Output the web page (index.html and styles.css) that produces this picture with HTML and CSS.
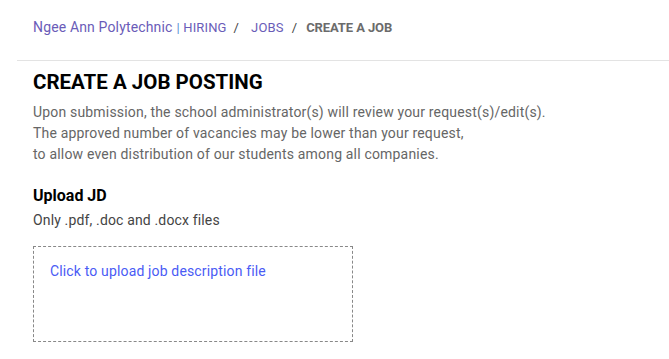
FILE: index.html
```html
<!DOCTYPE html>
<html>
<head>
<meta charset="utf-8">
<link rel="stylesheet" href="styles.css">
</head>
<body>
<nav class="crumbs">
  <span class="brand">Ngee Ann Polytechnic</span>
  <span class="org"><span class="pipe">|</span> HIRING</span>
  <span class="sep">/</span>
  <span class="link">JOBS</span>
  <span class="sep sep-2">/</span>
  <span class="current">CREATE A JOB</span>
</nav>
<main class="content">
  <h1 class="title">CREATE A JOB POSTING</h1>
  <p class="intro">Upon submission, the school administrator(s) will review your request(s)/edit(s).<br>The approved number of vacancies may be lower than your request,<br>to allow even distribution of our students among all companies.</p>
  <h2 class="subtitle">Upload JD</h2>
  <p class="hint">Only .pdf, .doc and .docx files</p>
  <div class="dropzone"><span class="drop-text">Click to upload job description file</span></div>
</main>
</body>
</html>
```
FILE: styles.css
```css
* { box-sizing: border-box; }
body {
  margin: 0;
  font-family: Roboto, "Noto Sans", sans-serif;
  background: #fff;
}
.crumbs {
  height: 60px;
  padding: 18px 0 0 33px;
  display: flex;
  align-items: baseline;
  font-size: 13px;
  line-height: 18px;
  letter-spacing: 0.15px;
  color: #666;
  white-space: nowrap;
}
.brand { font-size: 14px; color: #6a5cb8; }
.org { color: #6a5cb8; margin-left: 4px; white-space: pre; }
.pipe { color: #5b8fd6; }
.link { color: #6a5cb8; }
.sep { color: #444; margin: 0 12px 0 7px; }
.sep-2 { margin: 0 9px 0 8px; }
.current { color: #6b6b6b; font-weight: 700; letter-spacing: -0.1px; }
.content {
  margin-left: 17px;
  border-top: 1px solid #e3e3e3;
  padding: 8px 0 0 16px;
}
.title {
  margin: 0;
  font-size: 20.5px;
  line-height: 26px;
  font-weight: 700;
  color: #000;
}
.intro {
  margin: 7px 0 0;
  font-size: 14px;
  line-height: 21px;
  letter-spacing: 0.18px;
  color: #666;
}
.subtitle {
  margin: 20px 0 0;
  font-size: 16px;
  line-height: 22px;
  font-weight: 700;
  color: #000;
}
.hint {
  margin: 3px 0 0;
  font-size: 14px;
  line-height: 20px;
  letter-spacing: 0.15px;
  color: #444;
}
.dropzone {
  margin-top: 16px;
  width: 320px;
  height: 96px;
  border: 1px dashed #888;
  padding: 14px 0 0 16px;
}
.drop-text {
  font-size: 14px;
  line-height: 20px;
  letter-spacing: 0.15px;
  color: #4a5bf5;
}
```
